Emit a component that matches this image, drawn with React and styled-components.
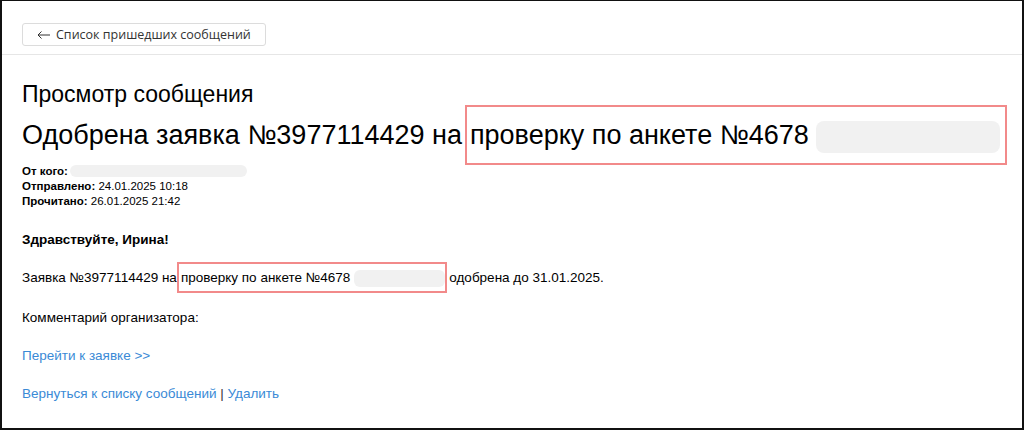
import React from "react";
import styled, { createGlobalStyle } from "styled-components";

const Global = createGlobalStyle`
  html, body { margin: 0; padding: 0; background: #fff; }
  body { font-family: "Liberation Sans", Arial, sans-serif; color: #000; }
`

const Frame = styled.div`
  box-sizing: border-box;
  width: 1024px;
  height: 430px;
  border: 2px solid #111;
  border-top-width: 1px;
  overflow: hidden;
`
const Toolbar = styled.div`
  padding: 22px 20px 8px;
  border-bottom: 1px solid #e6e6e6;
`
const BackButton = styled.button`
  display: inline-flex;
  align-items: center;
  gap: 6px;
  height: 23px;
  padding: 0 14px;
  background: #fff;
  border: 1px solid #dcdcdc;
  border-radius: 3px;
  font-family: "Open Sans", sans-serif;
  font-size: 12.5px;
  color: #333;
  cursor: pointer;
`
const Content = styled.div`
  padding: 25px 20px 0;
`
const PageTitle = styled.h1`
  margin: 0;
  font-size: 23px;
  font-weight: normal;
  line-height: 28px;
`
const Subject = styled.h2`
  margin: 10px 0 0;
  font-size: 27px;
  font-weight: normal;
  line-height: 34px;
  white-space: nowrap;
`
const Mark = styled.span`
  border: 2px solid #f28a8a;
  margin: ${p => p.$big ? "0 0 0 3px" : "0 2px 0 0"};
  padding: ${p => p.$big ? "13px 5px 13px 3px" : "6px 0 6px 2px"};
`
const Hidden = styled.span`
  display: inline-block;
  vertical-align: middle;
  width: ${p => p.$w}px;
  height: ${p => p.$h}px;
  margin-left: ${p => p.$ml || 0}px;
  background: #f1f1f1;
  border-radius: ${p => p.$r || 6}px;
`
const Meta = styled.div`
  margin-top: 11px;
  font-size: 11.5px;
  line-height: 15px;
`
const MetaRow = styled.div`
  display: flex;
  align-items: center;
  gap: 2px;
  b { font-weight: bold; }
`
const Greeting = styled.p`
  margin: 23px 0 0;
  font-size: 13.5px;
  line-height: 16px;
  font-weight: bold;
`
const Para = styled.p`
  margin: 22.4px 0 0;
  font-size: 13.5px;
  line-height: 16px;
  color: ${p => p.$muted ? "#333" : "#000"};
`
const Link = styled.a`
  color: #3a8ad6;
  text-decoration: none;
`

const ArrowLeft = () => (
  <svg width="13" height="8" viewBox="0 0 13 8" fill="none" stroke="#333" strokeWidth="1">
    <path d="M1 4H13M4.5 0.5L1 4L4.5 7.5" />
  </svg>
)

export default function App() {
  return (
    <>
      <Global />
      <Frame>
        <Toolbar>
          <BackButton><ArrowLeft />Список пришедших сообщений</BackButton>
        </Toolbar>
        <Content>
          <PageTitle>Просмотр сообщения</PageTitle>
          <Subject>
            Одобрена заявка №3977114429 на
            <Mark $big>
              проверку по анкете №4678
              <Hidden $w={184} $h={32} $ml={7} $r={8} />
            </Mark>
          </Subject>
          <Meta>
            <MetaRow><b>От кого:</b><Hidden $w={177} $h={12} /></MetaRow>
            <MetaRow><span><b>Отправлено:</b> 24.01.2025 10:18</span></MetaRow>
            <MetaRow><span><b>Прочитано:</b> 26.01.2025 21:42</span></MetaRow>
          </Meta>
          <Greeting>Здравствуйте, Ирина!</Greeting>
          <Para>
            Заявка №3977114429 на
            <Mark>
              проверку по анкете №4678
              <Hidden $w={91} $h={17} $ml={4} />
            </Mark>
            одобрена до 31.01.2025.
          </Para>
          <Para>Комментарий организатора:</Para>
          <Para $muted><Link href="#">Перейти к заявке &gt;&gt;</Link></Para>
          <Para $muted>
            <Link href="#">Вернуться к списку сообщений</Link> | <Link href="#">Удалить</Link>
          </Para>
        </Content>
      </Frame>
    </>
  );
}
